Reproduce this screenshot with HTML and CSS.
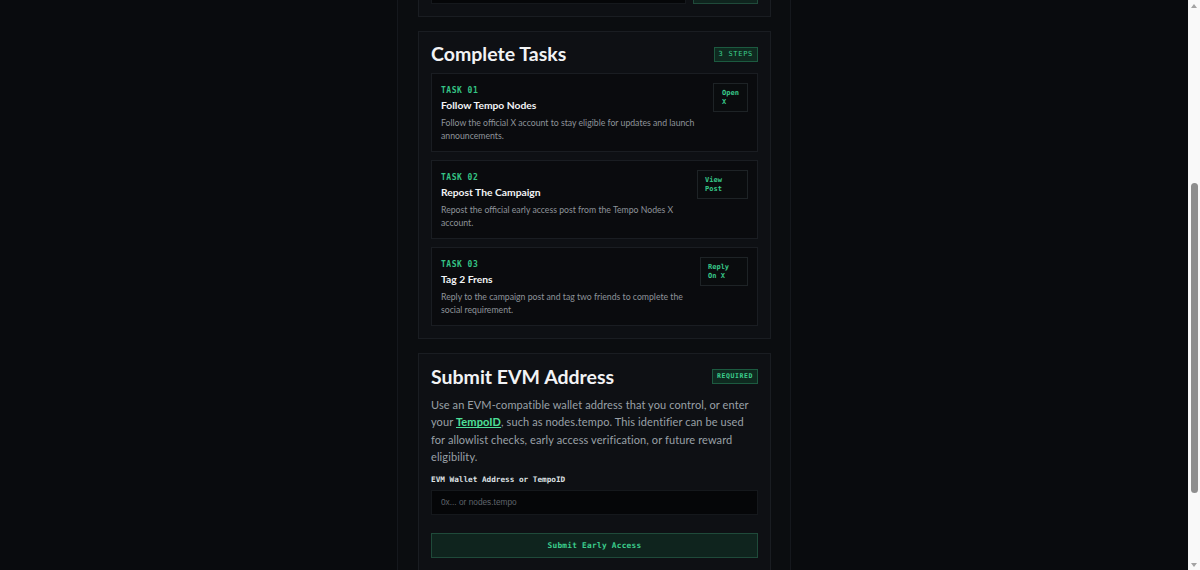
FILE: index.html
```html
<!DOCTYPE html>
<html lang="en">
<head>
<meta charset="utf-8">
<title>Tempo Nodes Early Access</title>
<link rel="stylesheet" href="styles.css">
</head>
<body>
<main class="shell">
  <section class="card card-check">
    <div class="card-head">
      <h2 class="card-title">Check Status</h2>
      <span class="badge">STEP 0</span>
    </div>
    <p class="lead">Look up an address to see whether it is already registered for early access.</p>
    <div class="check-row">
      <input class="field field-short" type="text" placeholder="0x... or nodes.tempo">
      <button class="ghost-btn" type="button">Check</button>
    </div>
  </section>

  <section class="card tasks">
    <div class="card-head">
      <h2 class="card-title">Complete Tasks</h2>
      <span class="badge">3 STEPS</span>
    </div>
    <div class="task-list">
      <article class="task">
        <div class="task-body">
          <div class="task-label">TASK 01</div>
          <h3 class="task-title">Follow Tempo Nodes</h3>
          <p class="task-desc">Follow the official X account to stay eligible for updates and launch announcements.</p>
        </div>
        <a class="task-btn btn-open" href="#">Open<br>X</a>
      </article>
      <article class="task">
        <div class="task-body">
          <div class="task-label">TASK 02</div>
          <h3 class="task-title">Repost The Campaign</h3>
          <p class="task-desc">Repost the official early access post from the Tempo Nodes X account.</p>
        </div>
        <a class="task-btn btn-view" href="#">View<br>Post</a>
      </article>
      <article class="task">
        <div class="task-body">
          <div class="task-label">TASK 03</div>
          <h3 class="task-title">Tag 2 Frens</h3>
          <p class="task-desc">Reply to the campaign post and tag two friends to complete the social requirement.</p>
        </div>
        <a class="task-btn btn-reply" href="#">Reply<br>On X</a>
      </article>
    </div>
  </section>

  <section class="card submit">
    <div class="card-head">
      <h2 class="card-title">Submit EVM Address</h2>
      <span class="badge badge-req">REQUIRED</span>
    </div>
    <p class="lead lead-submit">Use an EVM-compatible wallet address that you control, or enter your <a class="link" href="#">TempoID</a>, such as nodes.tempo. This identifier can be used for allowlist checks, early access verification, or future reward eligibility.</p>
    <label class="field-label" for="addr">EVM Wallet Address or TempoID</label>
    <input class="field" id="addr" type="text" placeholder="0x... or nodes.tempo">
    <button class="submit-btn" type="button">Submit Early Access</button>
  </section>

  <footer class="foot">
    <p>Tempo Nodes &middot; Early Access Campaign</p>
  </footer>
</main>

<div class="scrollbar" aria-hidden="true">
  <span class="sb-arrow sb-up"></span>
  <span class="sb-thumb"></span>
  <span class="sb-arrow sb-down"></span>
</div>
<script src="script.js"></script>
</body>
</html>
```

FILE: styles.css
```css
* { box-sizing: border-box; }

html, body {
  margin: 0;
  padding: 0;
}

body {
  background: #090b0e;
  font-family: Lato, "Noto Sans", sans-serif;
  color: #e9ebee;
  padding-right: 12px;
}

.shell {
  width: 394px;
  margin: 0 auto;
  padding: 24px 19px 40px 20px;
  background: #0b0d10;
  border-left: 1px solid #15181d;
  border-right: 1px solid #15181d;
  display: flex;
  flex-direction: column;
  gap: 14px;
}

.card {
  background: #0e1014;
  border: 1px solid #1a1d22;
  padding: 11px 12px 12px;
}

.card-check {
  height: 297px;
  display: flex;
  flex-direction: column;
  justify-content: flex-end;
}

.card-head {
  display: flex;
  align-items: center;
  justify-content: space-between;
  margin-bottom: 8px;
}

.card-title {
  margin: 0;
  font-size: 19.5px;
  font-weight: 700;
  line-height: 22px;
  color: #f2f3f5;
}

.submit .card-title { margin-top: 1px; }

.badge {
  font-family: "DejaVu Sans Mono", monospace;
  font-size: 7px;
  letter-spacing: 0.7px;
  color: #3ccf8e;
  background: #0f2a20;
  border: 1px solid #1c5a40;
  padding: 3px 4px;
  line-height: 7px;
}

.badge-req {
  font-weight: 700;
  letter-spacing: 0.6px;
  font-size: 6.5px;
}

.lead {
  margin: 0 0 14px;
  font-size: 11px;
  line-height: 17.4px;
  letter-spacing: 0.1px;
  color: #9aa0a7;
}

.lead-submit { margin-bottom: 9px; }

.link {
  color: #4ee19a;
  font-weight: 700;
  text-decoration: underline;
}

.check-row {
  display: flex;
  gap: 7px;
}

.field-short { flex: 1; }

.ghost-btn {
  width: 65px;
  height: 25px;
  background: #0f241e;
  border: 1px solid #1f4a3a;
  color: #3ccf8e;
  font-family: "DejaVu Sans Mono", monospace;
  font-size: 8px;
}

.task-list {
  display: flex;
  flex-direction: column;
  gap: 8px;
}

.task {
  display: flex;
  align-items: flex-start;
  justify-content: space-between;
  height: 79px;
  padding: 9px;
  background: #0a0b0e;
  border: 1px solid #1a1d22;
}

.task-body {
  padding-top: 3px;
}

.task-label {
  font-family: "DejaVu Sans Mono", monospace;
  font-size: 8px;
  letter-spacing: 0.5px;
  line-height: 9px;
  font-weight: 700;
  color: #35c485;
}

.task-title {
  margin: 3px 0 4px;
  font-size: 10.3px;
  font-weight: 700;
  line-height: 14px;
  color: #f2f3f5;
}

.task-desc {
  margin: 0;
  font-size: 8.7px;
  line-height: 13px;
  color: #8e939a;
}

.task-btn {
  flex: none;
  display: block;
  height: 29px;
  padding: 5px 7px;
  font-family: "DejaVu Sans Mono", monospace;
  font-size: 7px;
  line-height: 9px;
  font-weight: 700;
  color: #38c98a;
  text-decoration: none;
  background: #0a0c0e;
  border: 1px solid #1e2326;
}

.btn-open { width: 35px; padding-left: 8px; }
.btn-view { width: 51px; }
.btn-reply { width: 48px; }

.field-label {
  display: block;
  font-family: "DejaVu Sans Mono", monospace;
  font-size: 7.7px;
  line-height: 10px;
  font-weight: 700;
  color: #dfe1e4;
  margin: 0 0 5px;
}

.field {
  display: block;
  width: 100%;
  height: 25px;
  padding: 0 9px;
  background: #050608;
  border: 1px solid #15181c;
  color: #cfd2d6;
  font-family: "Liberation Sans", Arial, sans-serif;
  font-size: 8.3px;
  outline: none;
}

.field::placeholder { color: #5f646b; }

.submit-btn {
  display: block;
  width: 100%;
  height: 25px;
  margin-top: 18px;
  background: #0f241e;
  border: 1px solid #1f4a3a;
  color: #3ccf8e;
  font-family: "DejaVu Sans Mono", monospace;
  font-size: 7.8px;
  font-weight: 700;
  letter-spacing: 0.25px;
}

.foot {
  height: 70px;
  font-size: 9px;
  color: #5f646b;
  text-align: center;
}

.foot p { margin: 20px 0 0; }

/* browser scrollbar as it appears in the capture */
.scrollbar {
  position: fixed;
  top: 0;
  right: 0;
  width: 12px;
  height: 100%;
  background: #f9f9f9;
  z-index: 10;
}

.sb-arrow {
  position: absolute;
  left: 3px;
  width: 0;
  height: 0;
  border-left: 3.5px solid transparent;
  border-right: 3.5px solid transparent;
}

.sb-up {
  top: 4px;
  border-bottom: 4px solid #a3a3a3;
}

.sb-down {
  bottom: 3px;
  border-top: 4px solid #a3a3a3;
}

.sb-thumb {
  position: absolute;
  top: 183px;
  left: 3px;
  width: 7px;
  height: 310px;
  border-radius: 4px;
  background: #8e8e8e;
}
```

FILE: script.js
```js
(function () {
  function align() {
    var el = document.querySelector('.tasks');
    var top = el.getBoundingClientRect().top + window.scrollY - 31;
    window.scrollTo(0, top);
  }
  align();
  window.addEventListener('load', align);
})();
```
